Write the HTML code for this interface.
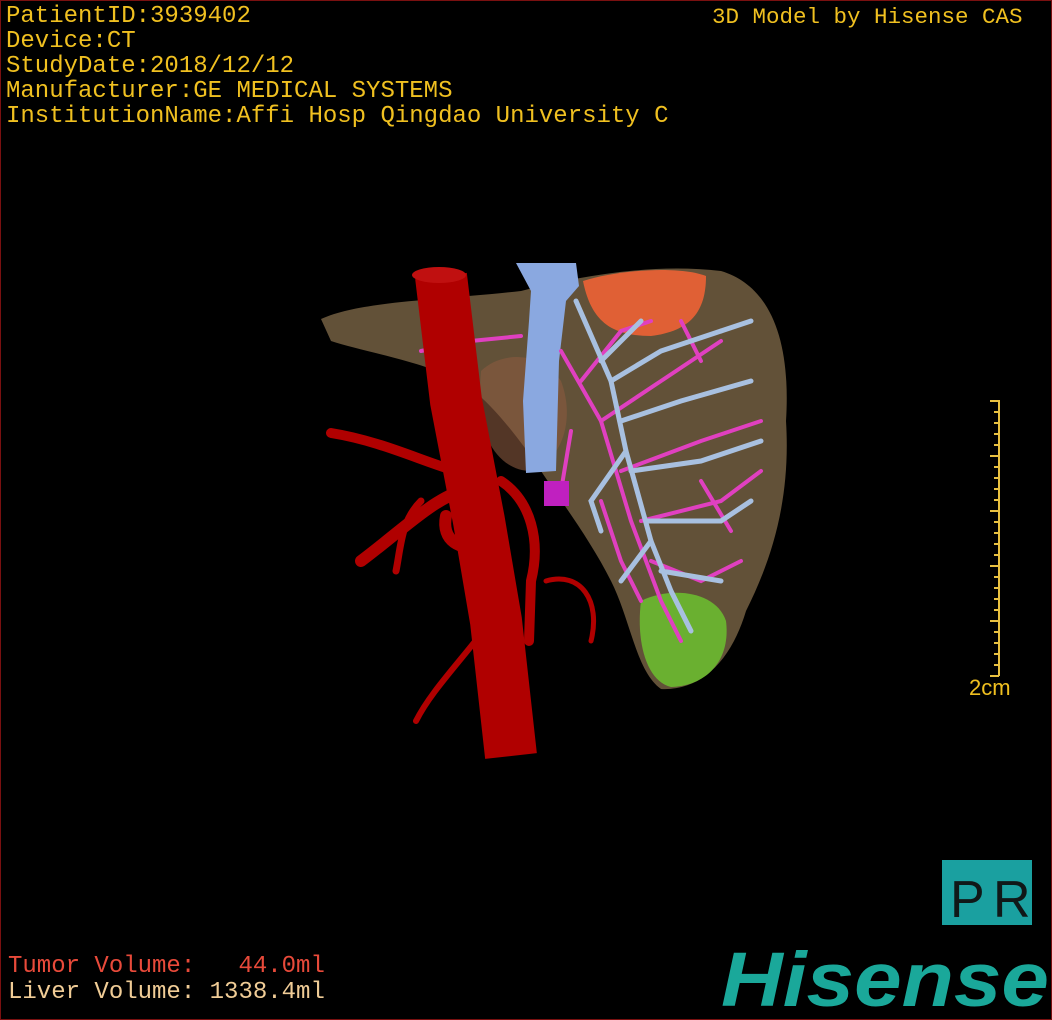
<!DOCTYPE html>
<html><head><meta charset="utf-8"><style>
html,body{margin:0;padding:0;background:#000}
#w{position:relative;width:1050px;height:1018px;border:1px solid #7a1010;background:#000;overflow:hidden}
.t{position:absolute;font-family:"Liberation Mono",monospace;font-size:24px;color:#f0c020;white-space:pre;line-height:25px}
</style></head><body><div id="w">
<div class="t" style="left:5px;top:3px">PatientID:3939402
Device:CT
StudyDate:2018/12/12
Manufacturer:GE MEDICAL SYSTEMS
InstitutionName:Affi Hosp Qingdao University C</div>
<div class="t" style="left:711px;top:4px;font-size:22.5px">3D Model by Hisense CAS</div>
<div class="t" style="left:7px;top:953px;color:#e84a3a">Tumor Volume:   44.0ml</div>
<div class="t" style="left:7px;top:979px;color:#f0cc96">Liver Volume: 1338.4ml</div>
<div class="t" style="left:968px;top:674px;font-family:'Liberation Sans',sans-serif;font-size:22px">2cm</div>
<svg width="1050" height="1018" style="position:absolute;left:0;top:0">
<g stroke="#e8c040" stroke-width="2">
<line x1="998" y1="399" x2="998" y2="675"/>
<path d="M989 400H998M989 455H998M989 510H998M989 565H998M989 620H998M989 675H998"/>
<path d="M993 411H998M993 422H998M993 433H998M993 444H998M993 466H998M993 477H998M993 488H998M993 499H998M993 521H998M993 532H998M993 543H998M993 554H998M993 576H998M993 587H998M993 598H998M993 609H998M993 631H998M993 642H998M993 653H998M993 664H998"/>
</g>
<path d="M320 318 C360 300 430 300 520 290 C580 275 650 262 720 270 C770 285 790 340 785 420 C790 500 770 560 745 610 C730 660 700 690 660 688 C635 670 630 620 610 580 C590 540 560 500 540 470 C520 440 490 400 460 380 C420 360 360 350 330 340 Z" fill="#735f42" opacity="0.85"/>
<path d="M480 370 C500 350 540 350 560 380 C575 420 560 460 530 470 C500 470 480 440 478 400Z" fill="#8a5a40" opacity="0.6"/>
<path d="M582 280 C620 268 680 265 705 275 C705 310 690 330 650 335 C610 335 590 320 582 280Z" fill="#e06035"/>
<path d="M640 600 C670 585 715 590 725 620 C730 660 705 685 670 686 C645 680 635 640 640 600Z" fill="#6ab030"/>
<path d="M515 262 L575 262 L578 285 L565 300 L558 360 L555 470 L525 472 L522 400 L528 320 L530 290 Z" fill="#8aa8e0"/>
<g stroke="#e040c0" stroke-width="4" fill="none" stroke-linecap="round">
<path d="M560 350 L600 420 L630 520 L660 600 L680 640"/>
<path d="M600 420 L660 380 L720 340 M620 470 L700 440 L760 420 M640 520 L720 500 L760 470 M650 560 L700 580 L740 560"/>
<path d="M580 380 L620 330 L650 320 M570 430 L560 490 M600 500 L620 560 L640 600"/>
<path d="M420 350 L470 340 L520 335 M680 320 L700 360 M700 480 L730 530"/>
</g>
<rect x="543" y="480" width="25" height="25" fill="#c020c0"/>
<g stroke="#a8c0e0" stroke-width="5" fill="none" stroke-linecap="round">
<path d="M575 300 L610 380 L625 450 L650 540 L670 590 L690 630"/>
<path d="M610 380 L660 350 L720 330 M620 420 L680 400 L750 380 M630 470 L700 460 L760 440 M645 520 L720 520 L750 500 M660 570 L720 580"/>
<path d="M625 450 L590 500 L600 530 M650 540 L620 580 M600 360 L640 320 M720 330 L750 320"/>
</g>
<g fill="none" stroke="#b00000" stroke-linecap="round">
<path d="M330 432 C380 440 420 460 455 470" stroke-width="10"/>
<path d="M460 490 C430 500 400 530 360 560" stroke-width="12"/>
<path d="M445 515 C440 540 460 550 480 545" stroke-width="12"/>
<path d="M500 480 C530 500 540 540 530 580 L528 640" stroke-width="10"/>
<path d="M490 620 C460 660 430 690 415 720" stroke-width="6"/>
<path d="M545 580 C580 570 600 600 590 640" stroke-width="5"/>
<path d="M420 500 C400 520 400 545 395 570" stroke-width="7"/>
<path d="M440 275 L455 400 L478 520 L495 620 L510 755" stroke-width="52" stroke-linecap="butt"/>
</g>
<ellipse cx="438" cy="274" rx="27" ry="8" fill="#c01010"/>
<rect x="941" y="859" width="90" height="65" fill="#1aa0a0"/>
<text x="949" y="916" font-family="Liberation Sans Narrow,Liberation Sans,sans-serif" font-size="52" fill="#101818">P</text>
<text x="992" y="916" font-family="Liberation Sans Narrow,Liberation Sans,sans-serif" font-size="52" fill="#101818">R</text>
<text x="720" y="1005" font-family="Liberation Sans,sans-serif" font-size="77" font-weight="bold" font-style="italic" fill="#1aa89a" textLength="328" lengthAdjust="spacingAndGlyphs">Hisense</text>
</svg>
</div></body></html>
